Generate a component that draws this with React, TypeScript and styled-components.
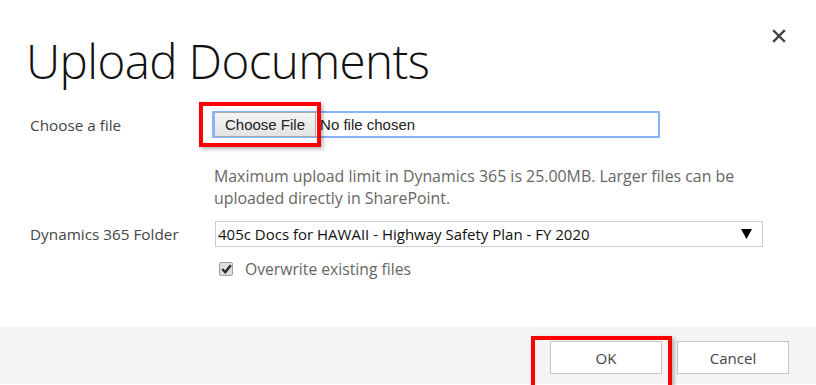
import styled, { createGlobalStyle } from 'styled-components';

const GlobalStyle = createGlobalStyle`
  html, body {
    margin: 0;
    padding: 0;
    background: #fff;
  }
  body {
    font-family: 'Open Sans', 'Liberation Sans', sans-serif;
  }
`;

function CloseIcon() {
  return (
    <svg width="14" height="14" viewBox="0 0 14 14">
      <path d="M2 2 L12 12 M12 2 L2 12" stroke="#444" strokeWidth="2.4" strokeLinecap="square" />
    </svg>
  );
}

function CaretDown() {
  return (
    <svg width="11" height="10" viewBox="0 0 11 10">
      <polygon points="0,0 11,0 5.5,10" fill="#000" />
    </svg>
  );
}

function CheckMark() {
  return (
    <svg width="11" height="10" viewBox="0 0 11 10">
      <path d="M1.2 5 L4.2 8.2 L9.8 1.2" stroke="#2a2a2a" strokeWidth="2.4" fill="none" />
    </svg>
  );
}

function App() {
  return (
    <>
      <GlobalStyle />
      <Dialog>
        <Header>
          <Title>Upload Documents</Title>
          <CloseButton aria-label="Close">
            <CloseIcon />
          </CloseButton>
        </Header>

        <Form>
          <Label>Choose a file</Label>
          <FileField>
            <ButtonWrap>
              <Highlight $top={-11} $left={-15} $right={-5} $bottom={-11} />
              <FileButton>Choose File</FileButton>
            </ButtonWrap>
            <FileName>No file chosen</FileName>
          </FileField>

          <Hint>
            Maximum upload limit in Dynamics 365 is 25.00MB. Larger files can be uploaded directly in SharePoint.
          </Hint>

          <Label>Dynamics 365 Folder</Label>
          <Select>
            <span>405c Docs for HAWAII - Highway Safety Plan - FY 2020</span>
            <CaretDown />
          </Select>

          <CheckRow>
            <CheckBox>
              <CheckMark />
            </CheckBox>
            Overwrite existing files
          </CheckRow>
        </Form>

        <Footer>
          <ButtonWrap>
            <Highlight $top={-5} $left={-19} $right={-10} $bottom={-9} />
            <FooterButton>OK</FooterButton>
          </ButtonWrap>
          <FooterButton>Cancel</FooterButton>
        </Footer>
      </Dialog>
    </>
  );
}

const Dialog = styled.div`
  width: 816px;
  height: 385px;
  display: flex;
  flex-direction: column;
  background: #fff;
  overflow: hidden;
`;

const Header = styled.div`
  display: flex;
  justify-content: space-between;
  align-items: flex-start;
  padding: 31px 30px 0 26px;
`;

const Title = styled.h1`
  margin: 0;
  font-family: 'Open Sans', sans-serif;
  font-weight: 300;
  font-size: 47.5px;
  line-height: 59px;
  color: #111;
  letter-spacing: -0.6px;
`;

const CloseButton = styled.button`
  border: 0;
  background: none;
  padding: 0;
  margin-top: -2px;
  width: 14px;
  height: 14px;
  display: flex;
`;

const Form = styled.div`
  display: grid;
  grid-template-columns: 184px 549px;
  align-items: center;
  padding: 21px 0 0 30px;
`;

const Label = styled.div`
  font-size: 15.3px;
  color: #444;
`;

const Highlight = styled.div<{ $top: number; $left: number; $right: number; $bottom: number }>`
  position: absolute;
  z-index: 2;
  top: ${(p) => p.$top}px;
  left: ${(p) => p.$left}px;
  right: ${(p) => p.$right}px;
  bottom: ${(p) => p.$bottom}px;
  border: 4px solid #ff0000;
  box-shadow: 2px 2px 4px rgba(0, 0, 0, 0.3);
  pointer-events: none;
`;

const ButtonWrap = styled.div`
  position: relative;
  display: flex;
  align-self: stretch;
`;

const FileField = styled.div`
  display: flex;
  align-items: center;
  width: 448px;
  height: 27px;
  margin-left: -2px;
  box-sizing: border-box;
  border: 2px solid #86b3fb;
  border-radius: 1px;
`;

const FileButton = styled.div`
  display: flex;
  align-items: center;
  padding: 0 10px;
  margin: -1px 0;
  background: linear-gradient(#f5f5f5, #e3e3e3);
  border: 1px solid #a9a9a9;
  border-left-color: #86b3fb;
  font-family: 'Liberation Sans', Arial, sans-serif;
  font-size: 15px;
  color: #222;
`;

const FileName = styled.div`
  padding-left: 4px;
  font-family: 'Liberation Sans', Arial, sans-serif;
  font-size: 15px;
  color: #222;
`;

const Hint = styled.div`
  grid-column: 2;
  margin: 27px 0 12px;
  font-size: 15.9px;
  line-height: 22px;
  color: #666;
  width: 540px;
`;

const Select = styled.div`
  height: 26px;
  box-sizing: border-box;
  border: 1px solid #ccc;
  display: flex;
  align-items: center;
  justify-content: space-between;
  padding: 0 10px 0 2px;
  margin-left: 1px;
  font-size: 15px;
  color: #111;
`;

const CheckRow = styled.div`
  grid-column: 2;
  display: flex;
  align-items: center;
  gap: 12px;
  margin: 11px 0 0 5px;
  font-size: 15.7px;
  color: #666;
`;

const CheckBox = styled.div`
  width: 14px;
  height: 14px;
  box-sizing: border-box;
  border: 1px solid #a0a0a0;
  border-radius: 2px;
  background: #dedede;
  display: flex;
  align-items: center;
  justify-content: center;
`;

const Footer = styled.div`
  margin-top: auto;
  margin-bottom: 1px;
  height: 57px;
  box-sizing: border-box;
  background: #f4f4f4;
  display: flex;
  justify-content: flex-end;
  align-items: flex-start;
  gap: 15px;
  padding: 14px 27px 0 0;
`;

const FooterButton = styled.button`
  width: 112px;
  height: 33px;
  box-sizing: border-box;
  border: 1px solid #c6c6c6;
  background: #fff;
  font-family: 'Open Sans', sans-serif;
  font-size: 15px;
  color: #444;
  padding: 0;
`;

export default App;
